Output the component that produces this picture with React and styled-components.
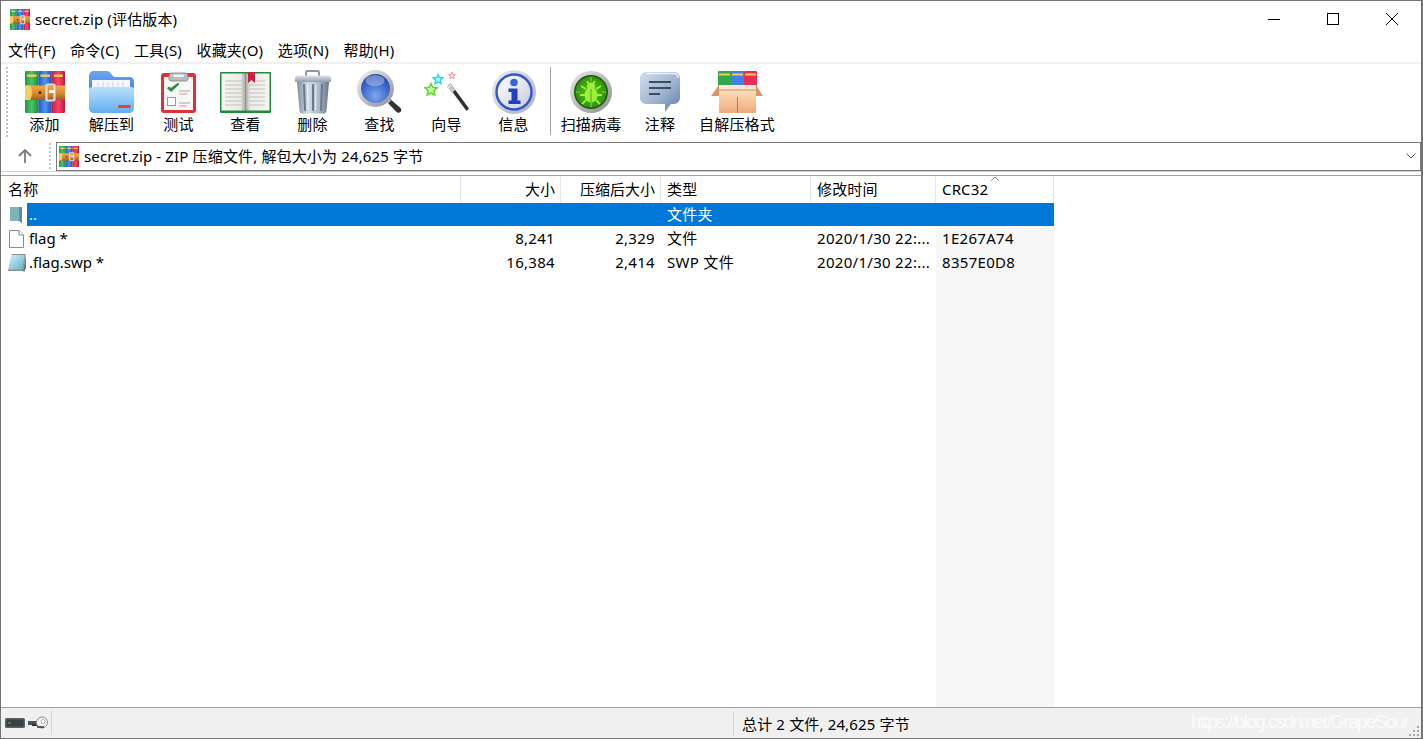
import React, { useId } from "react";
import styled, { createGlobalStyle } from "styled-components";

const Global = createGlobalStyle`
  html, body, #root { margin: 0; padding: 0; height: 100%; }
  body { background: #fff; overflow: hidden; font-family: "Noto Sans", "Noto Sans CJK SC", sans-serif; font-size: 15px; letter-spacing: .15px; color: #000; }
`;

const Win = styled.div`
  width: 1423px; height: 739px; box-sizing: border-box; display: flex; flex-direction: column;
  border: 1px solid #747474; border-right-width: 2px; background: #fff; overflow: hidden;
`;
const TitleBar = styled.div`
  height: 37px; flex: none; display: flex; align-items: center; padding-left: 9px;
`;
const TitleText = styled.div`
  margin-left: 5px; flex: 1; line-height: 20px; margin-top: -1px;
`;
const WinButtons = styled.div`display: flex; align-items: center; gap: 1px; margin-top: -1px;`;
const WinButton = styled.div`
  width: 58px; height: 36px; display: flex; align-items: center; justify-content: center;
`;
const MenuBar = styled.div`
  height: 24px; flex: none; display: flex; align-items: center; gap: 14.6px; padding-left: 7px;
  border-bottom: 2px solid #f0f0f0;
`;
const MenuItem = styled.div`line-height: 22px; white-space: nowrap;`;
const Toolbar = styled.div`
  height: 77px; flex: none; display: flex; padding: 3px 0 0 5px; box-sizing: border-box;
`;
const Grip = styled.div`
  width: 1px; flex: none; margin-right: ${p => p.$gap}px; height: ${p => p.$h}px;
  border-left: 2px dotted #c4c4c4;
`;
const ToolButton = styled.div`
  width: ${p => p.$w || 67}px; flex: none; display: flex; flex-direction: column; align-items: center; padding-top: 2px;
`;
const IconSlot = styled.div`
  height: 46px; display: flex; align-items: center; justify-content: center; flex: none;
`;
const ToolLabel = styled.div`line-height: 20px; white-space: nowrap; margin-top: -1px;`;
const ToolSep = styled.div`
  width: 1px; background: #a0a0a0; height: 68px; flex: none; margin: 0 1px 0 3px;
`;
const AddressRow = styled.div`
  height: 31px; flex: none; display: flex; align-items: center; box-sizing: border-box;
  border-bottom: 1px solid #d0d0d0;
`;
const UpSlot = styled.div`
  width: 48px; flex: none; display: flex; align-items: center; justify-content: center;
`;
const AddressBox = styled.div`
  flex: 1; height: 29px; box-sizing: border-box; border: 1px solid #7a7a7a;
  display: flex; align-items: center; padding-left: 2px; gap: 5px;
`;
const AddressText = styled.div`flex: 1; white-space: nowrap; line-height: 20px; margin-top: -1px;`;
const Chevron = styled.div`width: 18px; display: flex; justify-content: center;`;
const List = styled.div`
  flex: 1; min-height: 0; display: flex; flex-direction: column; margin-top: 3px;
  border-top: 1px solid #a0a0a0; border-bottom: 1px solid #a0a0a0;
  background: linear-gradient(#f7f7f7, #f7f7f7) 935px 0 / 118px 100% no-repeat;
`;
const colTemplate = "460px 100px 100px 150px 125px 118px";
const HeaderRow = styled.div`
  display: grid; grid-template-columns: ${colTemplate}; height: 27px; flex: none; width: 1053px; background: #fff;
`;
const HeaderCell = styled.div`
  position: relative; box-sizing: border-box; line-height: 26px; padding: 0 ${p => p.$right ? 5 : 6}px 0 ${p => p.$first ? 7 : 6}px;
  letter-spacing: ${p => p.$right ? 0 : ".15px"};
  text-align: ${p => p.$right ? "right" : "left"}; border-right: 1px solid #e5e5e5; white-space: nowrap;
`;
const SortCaret = styled.svg`position: absolute; left: 54px; top: 0;`;
const Row = styled.div`
  display: grid; grid-template-columns: ${colTemplate}; height: 24px; flex: none; width: 1053px;
  color: ${p => p.$selected ? "#fff" : "#000"};
`;
const NameCell = styled.div`display: flex; align-items: stretch; min-width: 0;`;
const RowIcon = styled.div`
  width: 26px; flex: none; display: flex; align-items: center; justify-content: center; padding-left: 5px; box-sizing: border-box;
`;
const NameLabel = styled.div`
  flex: 1; line-height: 23px; padding-left: 2px; height: 23px; letter-spacing: 0;
  background: ${p => p.$selected ? "#0078d7" : "transparent"};
`;
const Cell = styled.div`
  box-sizing: border-box; line-height: 23px; height: 23px; padding: 0 6px; white-space: nowrap;
  letter-spacing: .3px;
  text-align: ${p => p.$right ? "right" : "left"};
  background: ${p => p.$selected ? "#0078d7" : "transparent"};
`;
const StatusBar = styled.div`
  height: 30px; flex: none; background: #f0f0f0; display: flex; align-items: center; position: relative;
`;
const StatusIcons = styled.div`
  width: 51px; height: 24px; flex: none; display: flex; align-items: center; gap: 3px; padding-left: 4px; box-sizing: border-box;
  border-right: 1px solid #d4d4d4;
`;
const StatusSpacer = styled.div`width: 681px; height: 24px; flex: none; border-right: 1px solid #d4d4d4;`;
const StatusText = styled.div`padding-left: 8px; white-space: nowrap;`;
const Watermark = styled.div`
  position: absolute; left: 1190px; top: 1px; font-family: "Liberation Sans", sans-serif; font-size: 19px; line-height: 26px;
  color: #fff; opacity: .75; letter-spacing: -1.65px; white-space: nowrap;
`;
const ResizeGrip = styled.svg`position: absolute; right: 1px; bottom: 1px;`;

function RarIcon({ size = 40 }) {
  const id = useId();
  const h = size * 42 / 40;
  return (
    <svg width={size} height={h} viewBox="0 0 40 42">
      <defs>
        <linearGradient id={id + "g"} x1="0" x2="1" y1="0" y2="0"><stop offset="0" stopColor="#1e9b43" /><stop offset=".5" stopColor="#48c465" /><stop offset="1" stopColor="#1b8c3b" /></linearGradient>
        <linearGradient id={id + "b"} x1="0" x2="1" y1="0" y2="0"><stop offset="0" stopColor="#1f55c8" /><stop offset=".5" stopColor="#4f94ef" /><stop offset="1" stopColor="#1e4fc0" /></linearGradient>
        <linearGradient id={id + "r"} x1="0" x2="1" y1="0" y2="0"><stop offset="0" stopColor="#cf1b3c" /><stop offset=".5" stopColor="#f4486e" /><stop offset="1" stopColor="#c9143a" /></linearGradient>
        <linearGradient id={id + "t"} x1="0" x2="0" y1="0" y2="1"><stop offset="0" stopColor="#f0a748" /><stop offset=".55" stopColor="#d98a2e" /><stop offset="1" stopColor="#a05c18" /></linearGradient>
      </defs>
      <rect x="0" y="0" width="13.4" height="42" rx="1" fill={`url(#${id}g)`} />
      <rect x="13.4" y="0" width="13.4" height="42" fill={`url(#${id}b)`} />
      <rect x="26.8" y="0" width="13.2" height="42" rx="1" fill={`url(#${id}r)`} />
      <rect x="2" y="3.5" width="9.5" height="2.4" fill="#f2d04c" />
      <rect x="15.4" y="3.5" width="9.5" height="2.4" fill="#f2d04c" />
      <rect x="28.8" y="3.5" width="9" height="2.4" fill="#f2d04c" />
      <rect x="0" y="14.5" width="40" height="14.5" fill={`url(#${id}t)`} />
      <path d="M0 14.5h5c2.5 2 2.5 12.5 0 14.5H0z" fill="#f4ce64" />
      <circle cx="15" cy="21.5" r="1.5" fill="#4a2a10" />
      <rect x="21.5" y="13.5" width="8" height="16" rx="1" fill="none" stroke="#dcdcdc" strokeWidth="2.2" />
      <rect x="24" y="19" width="6" height="3" fill="#f2f2f2" />
    </svg>
  );
}
function FolderIcon() {
  return (
    <svg width="45" height="42" viewBox="0 0 45 42">
      <defs>
        <linearGradient id="foldF" x1="0" x2="0" y1="0" y2="1"><stop offset="0" stopColor="#b9e0fb" /><stop offset="1" stopColor="#63aef0" /></linearGradient>
        <linearGradient id="foldB" x1="0" x2="0" y1="0" y2="1"><stop offset="0" stopColor="#6aa8f2" /><stop offset="1" stopColor="#2f62d8" /></linearGradient>
      </defs>
      <path d="M0 5C0 2 2 0 5 0h13c3 0 4 3 6 5 1 1 2 1 3 1h14c2 0 4 2 4 4v24H0z" fill="url(#foldB)" />
      <path d="M3 9h38v16H3z" fill="#f4f8fc" />
      <path d="M9 11v8M14 11v8M19 11v8M24 11v8M29 11v8M34 11v8" stroke="#c9d3de" strokeWidth="1" />
      <path d="M0 19c0-2 1-3 3-3h39c2 0 3 1 3 3v18c0 3-2 5-5 5H5c-3 0-5-2-5-5z" fill="url(#foldF)" />
      <rect x="29" y="34" width="12.5" height="3" rx=".5" fill="#e2452f" />
    </svg>
  );
}
function ClipboardIcon() {
  return (
    <svg width="35" height="41" viewBox="0 0 35 41">
      <rect x="0" y="1" width="35" height="40" rx="3" fill="#d9333a" />
      <rect x="3" y="5" width="29" height="33" fill="#f7f7f5" />
      <path d="M8 4c0-2 1-3 3-3h13c2 0 3 1 3 3v3c0 1-1 2-2 2H10C9 9 8 8 8 7z" fill="#b9bcc0" stroke="#7b7b7b" strokeWidth=".8" />
      <rect x="12" y="2.5" width="11" height="2.5" rx="1" fill="#f2f2f2" />
      <path d="M6.500 16l3.500 3.500L18 12l-1.500-.5-6.500 5-2-1.500z" fill="#2d8c3c" stroke="#2d8c3c" strokeWidth="1" />
      <path d="M18 19h11M18 22h8M18 31h11M18 34h8" stroke="#a9a9a9" strokeWidth="1.2" />
      <rect x="6.5" y="25.5" width="8" height="8" fill="#fff" stroke="#9a9a9a" strokeWidth="1" />
    </svg>
  );
}
function BookIcon() {
  return (
    <svg width="51" height="41" viewBox="0 0 51 41">
      <defs>
        <linearGradient id="pageL" x1="0" x2="1" y1="0" y2="0"><stop offset="0" stopColor="#f6f6f2" /><stop offset=".8" stopColor="#ebebe6" /><stop offset="1" stopColor="#a5a59e" /></linearGradient>
        <linearGradient id="pageR" x1="0" x2="1" y1="0" y2="0"><stop offset="0" stopColor="#a5a59e" /><stop offset=".2" stopColor="#ebebe6" /><stop offset="1" stopColor="#f6f6f2" /></linearGradient>
      </defs>
      <rect x="0" y="0" width="51" height="41" rx="1" fill="#1f8a3a" />
      <rect x="1.500" y="1.500" width="24" height="37" fill="url(#pageL)" />
      <rect x="25.5" y="1.500" width="24" height="37" fill="url(#pageR)" />
      <path d="M5 9h17M5 13h17M5 17h17M5 21h17M5 25h17M5 29h17M5 33h17M29 13h16M29 17h16M29 21h16M29 25h16M29 29h16M29 33h16M36 9h9" stroke="#c2c2bc" strokeWidth="1.200" />
      <path d="M28 0h7v11l-3.500-3-3.500 3z" fill="#c8213a" />
    </svg>
  );
}
function TrashIcon() {
  return (
    <svg width="38" height="44" viewBox="0 0 38 44">
      <defs>
        <linearGradient id="binB" x1="0" x2="1" y1="0" y2="0"><stop offset="0" stopColor="#7f8ea3" /><stop offset=".35" stopColor="#d5dde7" /><stop offset=".7" stopColor="#a9b6c6" /><stop offset="1" stopColor="#66758a" /></linearGradient>
        <linearGradient id="binL" x1="0" x2="0" y1="0" y2="1"><stop offset="0" stopColor="#e1e6ec" /><stop offset="1" stopColor="#8f9cae" /></linearGradient>
      </defs>
      <path d="M12 6V2.500c0-1 .5-1.500 1.500-1.500h10c1 0 1.500.5 1.500 1.500V6" fill="none" stroke="#8b96a5" strokeWidth="2" />
      <path d="M1 8c0-1.500 1-2.500 2.500-2.500h31c1.500 0 2.500 1 2.500 2.500v4H1z" fill="url(#binL)" />
      <path d="M3 12h32l-2.500 29c-.2 1.500-1 2.500-2.500 2.500H8c-1.500 0-2.300-1-2.500-2.500z" fill="url(#binB)" />
      <path d="M10 15l1 25M19 15v25M28 15l-1 25" stroke="#6a788e" strokeWidth="2" strokeLinecap="round" />
      <path d="M13.500 15l.6 25M22 15l-.3 25" stroke="#eef2f6" strokeWidth="1" />
    </svg>
  );
}
function MagnifierIcon() {
  return (
    <svg width="45" height="44" viewBox="0 0 45 44">
      <defs>
        <radialGradient id="lens" cx=".5" cy=".75" r=".8"><stop offset="0" stopColor="#7fa8ec" /><stop offset=".6" stopColor="#3d66c9" /><stop offset="1" stopColor="#1f3f9e" /></radialGradient>
        <linearGradient id="rim" x1="0" x2="1" y1="0" y2="1"><stop offset="0" stopColor="#f2f2f2" /><stop offset="1" stopColor="#8b8f96" /></linearGradient>
      </defs>
      <path d="M29 31l3-3 11.500 10c1 1 1 3 0 4s-3 1-4 0z" fill="#2d3138" />
      <path d="M27 29l3-2 4 3.500-3 3z" fill="#c9cdd2" />
      <circle cx="18.500" cy="18.500" r="18.500" fill="url(#rim)" />
      <circle cx="18.500" cy="18.500" r="14.500" fill="url(#lens)" />
      <ellipse cx="18" cy="10.500" rx="9.500" ry="5.500" fill="#fff" opacity=".32" />
    </svg>
  );
}
function WandIcon() {
  return (
    <svg width="45" height="42" viewBox="0 0 45 42">
      <path d="M14 3.500l1.500 3 3.500.3-2.700 2.400.8 3.400-3.100-1.800-3 1.800.8-3.400L9 6.800l3.500-.3z" fill="#bff8ff" stroke="#22d6ea" strokeWidth="1.400" />
      <path d="M28 1l1 2.300 2.500.2-1.900 1.700.6 2.500L28 6.400l-2.200 1.300.6-2.500-1.900-1.700 2.500-.2z" fill="#ffd5dc" stroke="#f79aa8" strokeWidth="1" />
      <path d="M7 12.500l1.900 3.800 4.200.5-3.100 3 .8 4.200-3.800-2-3.800 2 .8-4.200-3-3 4.200-.5z" fill="#c9ff9e" stroke="#5fdc2e" strokeWidth="1.600" />
      <path d="M24 15l2.500-2.500L45 37.500 42.500 40z" fill="#2d2f33" />
      <path d="M23 16l3.500-3.500 5 6-3.500 3.500z" fill="#c2c6cb" />
      <path d="M24 17l3-3" stroke="#fff" strokeWidth="1" />
    </svg>
  );
}
function InfoIcon() {
  return (
    <svg width="44" height="44" viewBox="0 0 44 44">
      <defs>
        <linearGradient id="infoR" x1="0" x2="1" y1="0" y2="1"><stop offset="0" stopColor="#f0f0f4" /><stop offset="1" stopColor="#a9adb8" /></linearGradient>
        <linearGradient id="infoI" x1="0" x2="1" y1="0" y2="1"><stop offset="0" stopColor="#fff" /><stop offset=".5" stopColor="#e3e6ee" /><stop offset="1" stopColor="#c3c9d8" /></linearGradient>
      </defs>
      <circle cx="22" cy="22" r="22" fill="url(#infoR)" />
      <circle cx="22" cy="22" r="17.500" fill="url(#infoI)" stroke="#2f55cf" strokeWidth="2.400" />
      <circle cx="22" cy="12.500" r="3.800" fill="#3565dc" />
      <path d="M16.500 18.500h9v12h3v3.500h-12v-3.500h3v-8.500h-3z" fill="#1f3fbe" />
    </svg>
  );
}
function BugIcon() {
  return (
    <svg width="44" height="42" viewBox="0 0 44 42">
      <defs>
        <linearGradient id="bugR" x1="0" x2="1" y1="0" y2="1"><stop offset="0" stopColor="#e8e8e8" /><stop offset="1" stopColor="#8a8d90" /></linearGradient>
        <radialGradient id="bugG" cx=".5" cy=".5" r=".55"><stop offset="0" stopColor="#58c81a" /><stop offset="1" stopColor="#2f8a0e" /></radialGradient>
      </defs>
      <circle cx="22" cy="21" r="21" fill="url(#bugR)" />
      <circle cx="22" cy="21" r="17" fill="#1a5c0a" />
      <circle cx="22" cy="21" r="15.500" fill="url(#bugG)" />
      <path d="M22 6v4M22 32v4M7 21h4M33 21h4" stroke="#7ed83a" strokeWidth="1.200" />
      <ellipse cx="22" cy="24" rx="6.500" ry="7.500" fill="#9bf03a" />
      <circle cx="22" cy="15.500" r="4" fill="#9bf03a" />
      <path d="M17 18l-5-3M27 18l5-3M16 24h-5M28 24h5M17 29l-4 4M27 29l4 4M20 13l-2-3M24 13l2-3" stroke="#9bf03a" strokeWidth="1.800" fill="none" />
      <path d="M22 18v13" stroke="#4da81a" strokeWidth="1" />
    </svg>
  );
}
function CommentIcon() {
  return (
    <svg width="40" height="40" viewBox="0 0 40 40">
      <defs>
        <linearGradient id="cmt" x1="0" x2="1" y1="0" y2="1"><stop offset="0" stopColor="#d3dfee" /><stop offset=".55" stopColor="#9db3cf" /><stop offset="1" stopColor="#5f7fa8" /></linearGradient>
      </defs>
      <path d="M6 0h28c3 0 6 3 6 6v20c0 3-3 6-6 6h-3l-6 8v-8H6c-3 0-6-3-6-6V6c0-3 3-6 6-6z" fill="url(#cmt)" />
      <path d="M6 1.500h28c2 0 4 2 4 4.500" stroke="#eef3f9" strokeWidth="1.500" fill="none" />
      <path d="M9 10h22M9 16h22M9 22h11" stroke="#3d4c60" strokeWidth="1.800" />
    </svg>
  );
}
function BoxIcon() {
  return (
    <svg width="52" height="42" viewBox="0 0 52 42">
      <defs>
        <linearGradient id="boxF" x1="0" x2="0" y1="0" y2="1"><stop offset="0" stopColor="#fbe0bd" /><stop offset="1" stopColor="#eeaa7a" /></linearGradient>
      </defs>
      <rect x="7" y="0" width="13" height="16" rx="1" fill="#2fa84f" />
      <rect x="20" y="0" width="13" height="16" fill="#3f80ea" />
      <rect x="33" y="0" width="13" height="16" rx="1" fill="#ea2c54" />
      <rect x="8" y="2.500" width="11" height="2" fill="#f2d04c" />
      <rect x="21" y="2.500" width="11" height="2" fill="#f2d04c" />
      <rect x="34" y="2.500" width="11" height="2" fill="#f2d04c" />
      <path d="M8 14h37l7 11h-8v-5H8v5H0z" fill="#d89567" />
      <path d="M8 14h37v6H8z" fill="#fbe8cf" />
      <rect x="8" y="19" width="37" height="23" fill="url(#boxF)" />
      <path d="M26.500 26v16" stroke="#b97c52" strokeWidth="1" />
      <path d="M8 19h37" stroke="#c98c62" strokeWidth="1" />
    </svg>
  );
}
function ParentIcon() {
  return (
    <svg width="13" height="17" viewBox="0 0 13 17">
      <path d="M0 0h12v16L9 14H0z" fill="#7fb3b7" />
      <path d="M9 0h3v16l-3-2z" fill="#5f8f96" />
    </svg>
  );
}
function FileIcon() {
  return (
    <svg width="15" height="18" viewBox="0 0 15 18">
      <path d="M.5.5h9.500l4.500 4.500v12.500H.5z" fill="#fff" stroke="#8c8c8c" />
      <path d="M10 .5V5h4.500" fill="#f2f2f2" stroke="#8c8c8c" />
    </svg>
  );
}
function SwpIcon() {
  return (
    <svg width="20" height="19" viewBox="0 0 20 19">
      <defs>
        <linearGradient id="swp" x1="0" x2="1" y1="0" y2="1"><stop offset="0" stopColor="#d5f0f5" /><stop offset="1" stopColor="#5fb0cc" /></linearGradient>
      </defs>
      <path d="M5 0h14l-3 17H1z" fill="#8a9298" />
      <path d="M4.500 1H18l-3 14.500H1.500z" fill="url(#swp)" />
      <path d="M19 1v13l-2 4.500-1-2z" fill="#5d7a85" />
    </svg>
  );
}
function KeyboardIcon() {
  return (
    <svg width="20" height="10" viewBox="0 0 20 10">
      <rect x="0" y="0" width="20" height="10" rx="1.500" fill="#5a6268" />
      <rect x="1.500" y="1.500" width="17" height="7" fill="#3a4044" />
      <rect x="3.500" y="4" width="2" height="2" fill="#5fa04a" />
    </svg>
  );
}
function KeyIcon() {
  return (
    <svg width="20" height="14" viewBox="0 0 20 14">
      <rect x="0" y="5" width="10" height="4" fill="#4b5258" />
      <rect x="4" y="8" width="8" height="2" fill="#2e3336" />
      <circle cx="14" cy="6.500" r="5.500" fill="#f4f4f4" stroke="#8a8a8a" />
      <circle cx="15" cy="5.500" r="2" fill="#fff" stroke="#b0b0b0" />
      <path d="M9 11h7" stroke="#333" strokeWidth="1.500" />
    </svg>
  );
}

const menus = ["文件(F)", "命令(C)", "工具(S)", "收藏夹(O)", "选项(N)", "帮助(H)"];
const tools1 = [
  ["添加", <RarIcon key="a" />], ["解压到", <FolderIcon key="b" />], ["测试", <ClipboardIcon key="c" />], ["查看", <BookIcon key="d" />],
  ["删除", <TrashIcon key="e" />], ["查找", <MagnifierIcon key="f" />], ["向导", <WandIcon key="g" />], ["信息", <InfoIcon key="h" />],
];
const tools2 = [
  ["扫描病毒", <BugIcon key="a" />, 78], ["注释", <CommentIcon key="b" />, 60], ["自解压格式", <BoxIcon key="c" />, 94],
];
const rows = [
  { icon: <ParentIcon />, name: "..", size: "", packed: "", type: "文件夹", time: "", crc: "", selected: true },
  { icon: <FileIcon />, name: "flag *", size: "8,241", packed: "2,329", type: "文件", time: "2020/1/30 22:...", crc: "1E267A74" },
  { icon: <SwpIcon />, name: ".flag.swp *", size: "16,384", packed: "2,414", type: "SWP 文件", time: "2020/1/30 22:...", crc: "8357E0D8" },
];

export default function App() {
  return (
    <>
      <Global />
      <Win>
        <TitleBar>
          <RarIcon size={20} />
          <TitleText>secret.zip (评估版本)</TitleText>
          <WinButtons>
            <WinButton><svg width="12" height="12"><path d="M0 6.500h12" stroke="#000" /></svg></WinButton>
            <WinButton><svg width="12" height="12"><rect x=".5" y=".5" width="11" height="11" fill="none" stroke="#000" /></svg></WinButton>
            <WinButton><svg width="12" height="12"><path d="M0 0l12 12M12 0L0 12" stroke="#000" /></svg></WinButton>
          </WinButtons>
        </TitleBar>
        <MenuBar>{menus.map(m => <MenuItem key={m}>{m}</MenuItem>)}</MenuBar>
        <Toolbar>
          <Grip $h={70} $gap={2} />
          {tools1.map(([l, i]) => <ToolButton key={l}><IconSlot>{i}</IconSlot><ToolLabel>{l}</ToolLabel></ToolButton>)}
          <ToolSep />
          {tools2.map(([l, i, w]) => <ToolButton key={l} $w={w}><IconSlot>{i}</IconSlot><ToolLabel>{l}</ToolLabel></ToolButton>)}
        </Toolbar>
        <AddressRow>
          <UpSlot>
            <svg width="14" height="14" viewBox="0 0 14 14"><path d="M7 14V1.500M1 7l6-6 6 6" fill="none" stroke="#7a7a7a" strokeWidth="1.800" /></svg>
          </UpSlot>
          <Grip $h={26} $gap={4} />
          <AddressBox>
            <RarIcon size={20} />
            <AddressText>secret.zip - ZIP 压缩文件, 解包大小为 24,625 字节</AddressText>
            <Chevron><svg width="10" height="6" viewBox="0 0 10 6"><path d="M.5.5L5 5 9.500.5" fill="none" stroke="#555" /></svg></Chevron>
          </AddressBox>
        </AddressRow>
        <List>
          <HeaderRow>
            <HeaderCell $first>名称</HeaderCell>
            <HeaderCell $right>大小</HeaderCell>
            <HeaderCell $right>压缩后大小</HeaderCell>
            <HeaderCell>类型</HeaderCell>
            <HeaderCell>修改时间</HeaderCell>
            <HeaderCell>CRC32<SortCaret width="10" height="6" viewBox="0 0 10 6"><path d="M1 5l4-4 4 4" fill="none" stroke="#888" /></SortCaret></HeaderCell>
          </HeaderRow>
          {rows.map(r => (
            <Row key={r.name} $selected={r.selected}>
              <NameCell>
                <RowIcon>{r.icon}</RowIcon>
                <NameLabel $selected={r.selected}>{r.name}</NameLabel>
              </NameCell>
              <Cell $right $selected={r.selected}>{r.size}</Cell>
              <Cell $right $selected={r.selected}>{r.packed}</Cell>
              <Cell $selected={r.selected}>{r.type}</Cell>
              <Cell $selected={r.selected}>{r.time}</Cell>
              <Cell $selected={r.selected}>{r.crc}</Cell>
            </Row>
          ))}
        </List>
        <StatusBar>
          <StatusIcons><KeyboardIcon /><KeyIcon /></StatusIcons>
          <StatusSpacer />
          <StatusText>总计 2 文件, 24,625 字节</StatusText>
          <Watermark>https://blog.csdn.net/GrapeSour</Watermark>
          <ResizeGrip width="12" height="12" viewBox="0 0 12 12"><path d="M9 1h2v2H9zM5 5h2v2H5zM9 5h2v2H9zM1 9h2v2H1zM5 9h2v2H5zM9 9h2v2H9z" fill="#a8a8a8" /></ResizeGrip>
        </StatusBar>
      </Win>
    </>
  );
}
